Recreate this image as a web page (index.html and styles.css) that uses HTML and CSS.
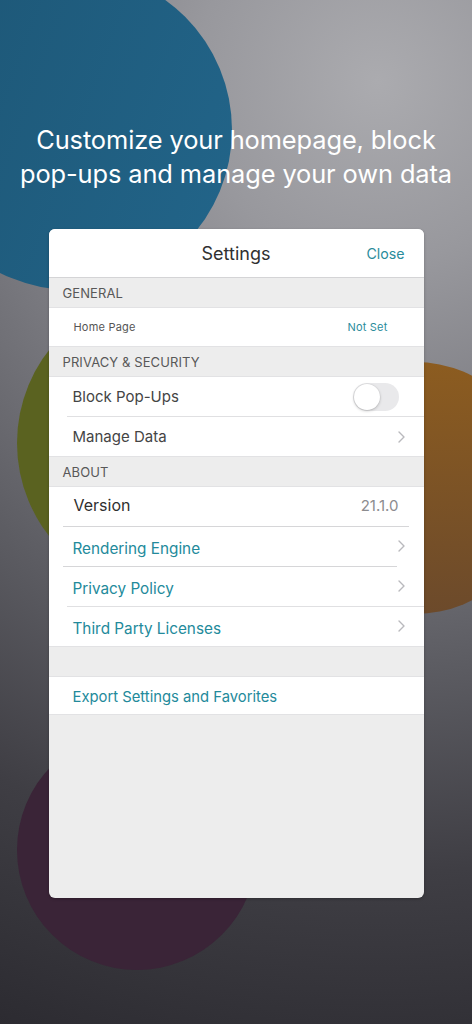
FILE: index.html
```html
<!DOCTYPE html>
<html lang="en">
<head>
<meta charset="utf-8">
<title>Settings</title>
<link rel="stylesheet" href="styles.css">
</head>
<body>
<div class="screen">
  <div class="blob blob-blue"></div>
  <div class="blob blob-green"></div>
  <div class="blob blob-orange"></div>
  <div class="blob blob-purple"></div>

  <h1 class="headline">Customize your homepage, block<br>pop-ups and manage your own data</h1>

  <div class="card">
    <div class="card-head">
      <span></span>
      <span class="card-title">Settings</span>
      <span class="card-close">Close</span>
    </div>

    <div class="section-label">GENERAL</div>
    <div class="group">
      <div class="row row-small">
        <span class="small-label">Home Page</span>
        <span class="small-value">Not Set</span>
      </div>
    </div>

    <div class="section-label">PRIVACY &amp; SECURITY</div>
    <div class="group">
      <div class="row">
        <span class="label">Block Pop-Ups</span>
        <span class="toggle"><span class="knob"></span></span>
      </div>
      <div class="sep sep-a"></div>
      <div class="row">
        <span class="label">Manage Data</span>
        <svg class="chev" width="7" height="12" viewBox="0 0 7 12"><polyline points="1,1 6,6 1,11" fill="none" stroke="#b9b9bd" stroke-width="1.4" stroke-linecap="round" stroke-linejoin="round"/></svg>
      </div>
    </div>

    <div class="section-label">ABOUT</div>
    <div class="group">
      <div class="row row-version">
        <span class="label label-dark">Version</span>
        <span class="version">21.1.0</span>
      </div>
      <div class="sep sep-b"></div>
      <div class="row row-link">
        <span class="label link">Rendering Engine</span>
        <svg class="chev" width="7" height="12" viewBox="0 0 7 12"><polyline points="1,1 6,6 1,11" fill="none" stroke="#b9b9bd" stroke-width="1.4" stroke-linecap="round" stroke-linejoin="round"/></svg>
      </div>
      <div class="sep sep-c"></div>
      <div class="row row-link">
        <span class="label link">Privacy Policy</span>
        <svg class="chev" width="7" height="12" viewBox="0 0 7 12"><polyline points="1,1 6,6 1,11" fill="none" stroke="#b9b9bd" stroke-width="1.4" stroke-linecap="round" stroke-linejoin="round"/></svg>
      </div>
      <div class="sep sep-a"></div>
      <div class="row row-link">
        <span class="label link">Third Party Licenses</span>
        <svg class="chev" width="7" height="12" viewBox="0 0 7 12"><polyline points="1,1 6,6 1,11" fill="none" stroke="#b9b9bd" stroke-width="1.4" stroke-linecap="round" stroke-linejoin="round"/></svg>
      </div>
    </div>

    <div class="spacer"></div>
    <div class="group">
      <div class="row row-export">
        <span class="label link link-export">Export Settings and Favorites</span>
      </div>
    </div>
  </div>
</div>
</body>
</html>
```

FILE: styles.css
```css
html, body {
  margin: 0;
  padding: 0;
}

body {
  font-family: Inter, "Liberation Sans", Arial, sans-serif;
  background: #2c2b31;
}

.screen {
  position: relative;
  width: 472px;
  height: 1024px;
  overflow: hidden;
  background: radial-gradient(circle at 80% 8%, #ababaf 0%, #98989d 18%, #7b7b81 38%, #5c5c62 58%, #3f3e44 78%, #2c2b31 100%);
  display: flex;
  flex-direction: column;
  align-items: center;
}

.blob {
  position: absolute;
  border-radius: 50%;
}

.blob-blue {
  left: -88px;
  top: -30px;
  width: 320px;
  height: 320px;
  background: linear-gradient(110deg, #1d5675 0%, #22658a 100%);
}

.blob-green {
  left: 17px;
  top: 292px;
  width: 302px;
  height: 302px;
  background: #5a6220;
}

.blob-orange {
  left: 289px;
  top: 362px;
  width: 252px;
  height: 252px;
  background: linear-gradient(180deg, #8c5c20 0%, #6c4a2b 100%);
}

.blob-purple {
  left: 17px;
  top: 730px;
  width: 240px;
  height: 240px;
  background: #3a2437;
}

.headline {
  position: relative;
  margin: 123px 0 0 0;
  color: #ffffff;
  font-weight: 400;
  font-size: 25.4px;
  line-height: 34px;
  letter-spacing: -0.1px;
  text-align: center;
  white-space: nowrap;
}

.card {
  position: relative;
  margin-top: 38px;
  width: 375px;
  height: 669px;
  background: #ededed;
  border-radius: 6px;
  overflow: hidden;
  box-shadow: 0 1px 3px rgba(0, 0, 0, 0.25);
  display: flex;
  flex-direction: column;
}

.card-head {
  height: 48px;
  background: #ffffff;
  border-bottom: 1px solid #d4d4d6;
  display: grid;
  grid-template-columns: 1fr auto 1fr;
  align-items: center;
  flex-shrink: 0;
}

.card-title {
  font-size: 18px;
  color: #303030;
}

.card-close {
  justify-self: end;
  padding-right: 19px;
  padding-top: 1px;
  font-size: 14.2px;
  color: #2a8c9c;
}

.section-label {
  height: 29px;
  padding-left: 14px;
  display: flex;
  align-items: center;
  font-size: 13px;
  color: #585858;
  letter-spacing: 0.1px;
  flex-shrink: 0;
}

.group {
  background: #ffffff;
  border-top: 1px solid #e2e2e4;
  border-bottom: 1px solid #e2e2e4;
  flex-shrink: 0;
}

.row {
  height: 39px;
  padding: 0 19px 0 24px;
  display: flex;
  align-items: center;
  justify-content: space-between;
}

.row-small {
  height: 38px;
  padding: 0 36px 0 25px;
}

.row-version {
  padding-bottom: 3px;
  height: 36px;
}

.row-link {
  padding-top: 3px;
  height: 36px;
}

.row-export {
  padding-top: 2px;
  height: 35px;
}

.row-link .chev {
  margin-top: -5px;
}

.small-label {
  font-size: 11px;
  color: #555555;
  letter-spacing: 0.2px;
}

.small-value {
  font-size: 11px;
  color: #2a8c9c;
  letter-spacing: 0.2px;
}

.label {
  font-size: 15px;
  color: #444444;
}

.label-dark {
  font-size: 16px;
  color: #2f2f2f;
  padding-left: 1px;
}

.link {
  color: #238a9b;
  font-size: 15.3px;
}

.link-export {
  font-size: 14.8px;
}

.version {
  font-size: 15px;
  color: #8c8c8f;
  padding-right: 6px;
}

.chev {
  display: block;
}

.sep {
  height: 1px;
  background: #e0e0e2;
}

.sep-a {
  margin-left: 18px;
}

.sep-b {
  margin-left: 14px;
  margin-right: 15px;
  background: #d6d6d8;
}

.sep-c {
  margin-left: 14px;
  margin-right: 27px;
  background: #d6d6d8;
}

.spacer {
  height: 29px;
  flex-shrink: 0;
}

.toggle {
  width: 46px;
  height: 28px;
  border-radius: 14px;
  background: #e9e9eb;
  position: relative;
  margin-right: 6px;
}

.knob {
  position: absolute;
  left: 1px;
  top: 1px;
  width: 26px;
  height: 26px;
  border-radius: 50%;
  background: #ffffff;
  box-shadow: 0 1px 3px rgba(0, 0, 0, 0.22), 0 0 0 0.5px rgba(0, 0, 0, 0.06);
}
```
